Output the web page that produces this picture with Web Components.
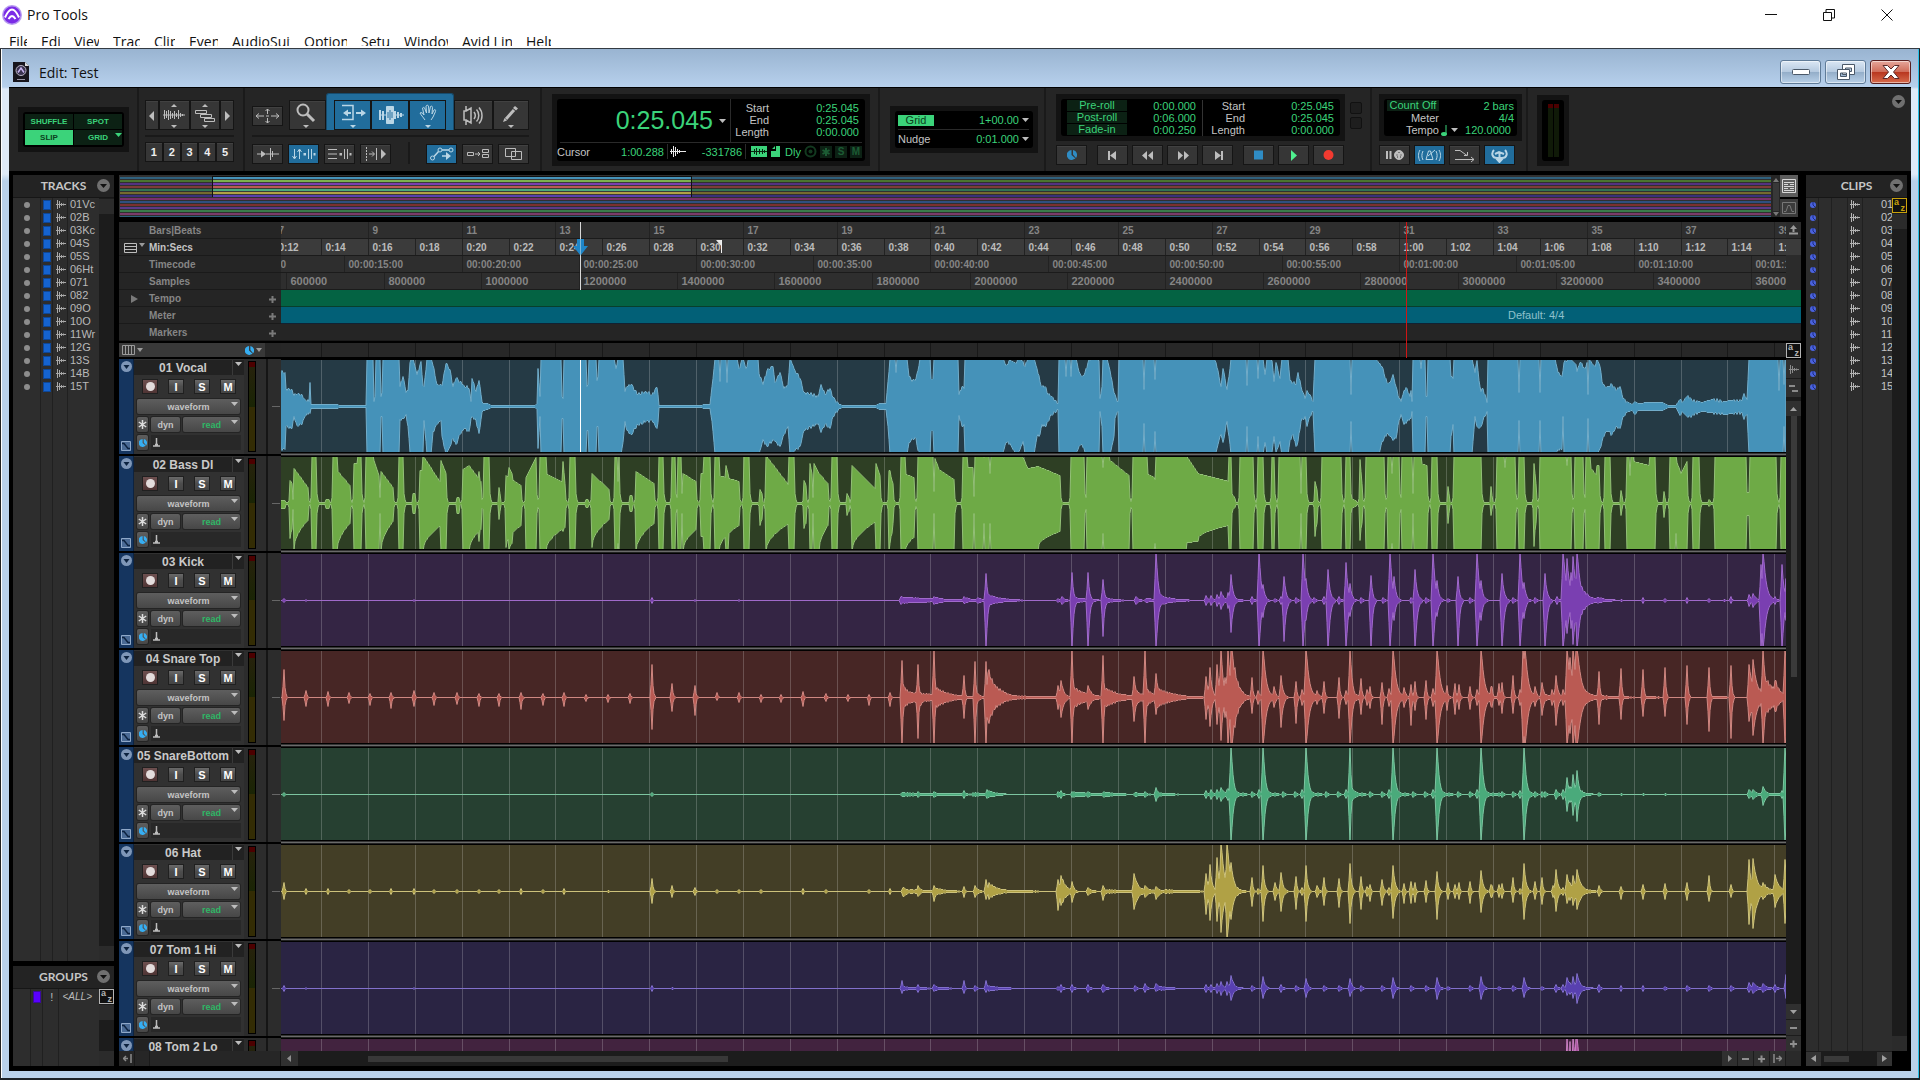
<!DOCTYPE html>
<html lang="en">
<head>
  <meta charset="UTF-8">
  <meta name="viewport" content="width=device-width, initial-scale=1.0">
  <title>Pro Tools</title>
  <style>
    html, body {
      margin: 0;
      height: 100%;
    }
    body {
      font-family: "Liberation Sans", Arial, sans-serif;
      font-size: 11px;
      background: #1d2227;
      overflow: hidden;
    }
  </style>
</head>
<body>

<daw-app></daw-app>

<script>
  const BASE = `
    *, *::before { box-sizing: border-box; }
    button, select {
      font: inherit; color: inherit; border: 0; padding: 0; margin: 0;
      background: none; appearance: none; display: block; border-radius: 0;
    }
    svg { display: block; flex: none; }
  `;

  function render(el, css, html) {
    const root = el.shadowRoot || el.attachShadow({ mode: 'open' });
    root.innerHTML = `<style>${BASE}${css}</style>${html}`;
    return root;
  }

  const icon = (w, h, body, color = '#bdbdbd') =>
    `<svg width="${w}" height="${h}" viewBox="0 0 ${w} ${h}" fill="none" stroke="${color}" aria-hidden="true">${body}</svg>`;

  const down = (color = '#bdbdbd', w = 7) => icon(w, 4, `<path d="M0 0h${w}l-${w / 2} 4z" fill="${color}" stroke="none"/>`);
  const miniWave = (color = '#c8c8c8') => icon(10, 9, '<path d="M1.500 0v9M3.500 1v7M5.500 3v3M7.500 3.500v2M0 4.500h10"/>', color);
  const timebase = (size = 10, color = '#36aef2') => icon(size, size,
    '<path d="M4.500 0A5 5 0 0 0 5 10L8.500 8.500 4.500 5zM6 0v4.500L9 8A5 5 0 0 0 6 0z" stroke="none" fill="' + color + '"/>').replace(/viewBox="[^"]*"/, 'viewBox="0 0 10 10"');
  const roundMenu = '<svg width="13" height="13" viewBox="0 0 13 13"><circle cx="6.500" cy="6.500" r="6.500" fill="#707070"/><path d="M3 5h7L6.500 9z" fill="#111"/></svg>';
  const bigWave = '<path d="M1.500 9v9M3.500 10v7M5.500 9v10M7.500 10v8M9.500 12v5M11.500 10v8M13.500 12v4M15.500 9v9M17.500 12v4M19.500 13v2M0 14h22"/>';

  // ---------- window frame ----------

  class MenuBar extends HTMLElement {
    connectedCallback() {
      const items = [['File', 18], ['Edit', 19], ['View', 25], ['Track', 27], ['Clip', 21], ['Event', 29],
        ['AudioSuite', 58], ['Options', 43], ['Setup', 29], ['Window', 44], ['Avid Link', 50], ['Help', 25]];
      render(this, `
        :host { display: block; background: #fff; color: #111; height: 49px; font: 14px "Open Sans", "Noto Sans", sans-serif; border-bottom: 1px solid #333a42; }
        .title { display: flex; align-items: center; height: 29px; padding: 0 4px 0 2px; gap: 5px; }
        .ctl { margin-left: auto; display: flex; }
        .ctl button { width: 58px; height: 29px; display: grid; place-items: center; }
        nav { display: flex; gap: 14px; padding-left: 9px; margin-top: 4px; }
        nav button { height: 13px; line-height: 17px; overflow: hidden; white-space: nowrap; text-align: left; display: flex; align-items: flex-start; }
      `, `
        <div class="title">
          <svg width="20" height="20" viewBox="0 0 20 20"><circle cx="10" cy="10" r="10" fill="#b79af0"/><circle cx="10" cy="10" r="8.500" fill="#7a2be6"/>
            <path d="M3 12.500C5 8 7.500 4.500 10 4.500s5 3.500 7 8M6.500 14c1.200-1.800 2.200-3 3.500-3s2.300 1.200 3.500 3" fill="none" stroke="#fff" stroke-width="2"/></svg>
          <span>Pro Tools</span>
          <span class="ctl">
            <button aria-label="Minimize">${icon(12, 12, '<path d="M0 5.500h12"/>', '#111')}</button>
            <button aria-label="Restore">${icon(12, 12, '<path d="M.5 3.500h8v8h-8zM3 3V.500h8.500V9H9"/>', '#111')}</button>
            <button aria-label="Close">${icon(12, 12, '<path d="M.5.500l11 11M11.500.500l-11 11"/>', '#111')}</button>
          </span>
        </div>
        <nav>${items.map(([t, w]) => `<button style="width:${w}px">${t}</button>`).join('')}</nav>
      `);
    }
  }
  customElements.define('menu-bar', MenuBar);

  class ChildWindow extends HTMLElement {
    connectedCallback() {
      render(this, `
        :host {
          display: flex; flex-direction: column; min-height: 0; padding: 0 8px 7px;
          border: solid #222; border-width: 0 1px 0 1px; box-shadow: inset 1px 0 #fff, inset -1px 0 #28c0e8;
          background: linear-gradient(#99b4d1, #b7d0ec 38px, #dfeaf7 40px, #dfeaf7 125px, #b9d1ea 132px);
        }
        header { display: flex; align-items: center; height: 38px; padding: 8px 0 0 4px; font: 14px "Open Sans", "Noto Sans", sans-serif; color: #111; gap: 10px; flex: none; }
        .ctl { margin-left: auto; display: flex; gap: 4px; }
        .ctl button { width: 41px; height: 24px; border: 1px solid #5f7b98; border-radius: 3px; display: grid; place-items: center;
          background: linear-gradient(#dbe7f4, #b4c9df 50%, #93adc8 50%, #b8d0e8); box-shadow: inset 0 0 0 1px #ffffff80; }
        .ctl .close { border-color: #581e1e; background: linear-gradient(#e6a79b, #cf6b58 50%, #b8351e 50%, #d66b4c); }
        .body { flex: 1; min-height: 0; background: #000; display: flex; flex-direction: column; padding-top: 1px; }
      `, `
        <header>
          <svg width="16" height="20" viewBox="0 0 16 20"><path d="M0 0h12l4 4v16H0z" fill="#17151c"/><circle cx="8" cy="8.500" r="5" fill="#3b3350" stroke="#b9b4c4"/>
            <path d="M5 10.500L8 6l3 4.500" fill="none" stroke="#c9b6f0" stroke-width="1.500"/><path d="M4 17.500h8" stroke="#9a96a5"/><path d="M12 0v4h4z" fill="#ddd"/></svg>
          <span>Edit: Test</span>
          <span class="ctl">
            <button aria-label="Minimize">${icon(20, 8, '<rect x="1.500" y="1.500" width="17" height="5" rx="1" fill="#fff"/>', '#4a5868')}</button>
            <button aria-label="Restore">${icon(20, 18, '<path d="M6.500 1.500h12v10h-12zM9.500 5h6v3.500h-6z" fill="#fff" fill-rule="evenodd"/><path d="M1.500 6.500h12v10h-12zM4.500 10h6v3.500h-6z" fill="#fff" fill-rule="evenodd"/>', '#4a5868')}</button>
            <button class="close" aria-label="Close">${icon(20, 16, '<path d="M2 1.500h4.500L10 5l3.500-3.500H18L12.500 8l5.500 6.500h-4.500L10 11l-3.500 3.500H2L7.500 8z" fill="#fff"/>', '#5a2a2a')}</button>
          </span>
        </header>
        <div class="body"><slot></slot></div>
      `);
    }
  }
  customElements.define('child-window', ChildWindow);

  // ---------- toolbar ----------

  class ToolButton extends HTMLElement {
    connectedCallback() {
      render(this, `
        :host { display: block; width: var(--w, 31px); height: var(--h, 20px); }
        button { width: 100%; height: 100%; display: grid; place-items: center; background: #363636; border: 1px solid #151515;
          box-shadow: inset 0 1px #414141; color: #eee; font-weight: bold; line-height: 1; }
        :host([on]) button { background: #216d9c; box-shadow: none; }
      `, `<button aria-label="${this.getAttribute('label') || ''}"><slot></slot></button>`);
    }
  }
  customElements.define('tool-button', ToolButton);

  class LcdPanel extends HTMLElement {
    connectedCallback() {
      render(this, `
        :host { display: block; background: #131313; padding: 5px; }
        div { height: 100%; background: #000; border-radius: 3px; color: #3bd37a; }
      `, '<div><slot></slot></div>');
    }
  }
  customElements.define('lcd-panel', LcdPanel);

  class EditToolbar extends HTMLElement {
    connectedCallback() {
      const btn = (label, body, { w = 31, h = 20, on = false, iw = w - 6, ih = h - 4, cls = '', color } = {}) =>
        `<tool-button class="${cls}" label="${label}" ${on ? 'on' : ''} style="--w:${w}px;--h:${h}px">${icon(iw, ih, body, color || (on ? '#b9d6e6' : '#bdbdbd'))}</tool-button>`;
      const solid = d => `<path d="${d}" fill="#bdbdbd" stroke="none"/>`;
      const caret = (x, y, c = '#bdbdbd') => `<path d="M${x - 3} ${y}h6l-3 3z" fill="${c}" stroke="none"/>`;
      const caretUp = (x, y) => `<path d="M${x - 3} ${y + 3}h6l-3-3z" fill="#bdbdbd" stroke="none"/>`;

      render(this, `
        :host { display: flex; height: 83px; background: #252525; color: #c4c4c4; flex: none; }
        section { border-right: 2px solid #1a1a1a; display: flex; flex: none; }
        .row { display: flex; }
        hr { width: 100%; border: 0; height: 2px; background: #191919; margin: 5px 0; }
        .modes { width: 130px; padding: 19px 8px 0 9px; }
        .modes lcd-panel { width: 111px; height: 45px; }
        .grid4 { display: grid; grid-template-columns: 1fr 1fr; grid-template-rows: 15px 15px; gap: 1px; padding: 2px; font-size: 8px; font-weight: bold; }
        .grid4 button { background: #0c2114; position: relative; }
        .grid4 .sel { background: #3bd37a; color: #0c4020; }
        .grid4 svg { position: absolute; right: 0; top: 3px; }
        .zooms { width: 106px; padding: 12px 9px 0 6px; flex-direction: column; }
        .tools { width: 297px; padding: 5px 11px 0 7px; flex-direction: column; }
        .tools .row { align-items: flex-end; }
        .smart { display: flex; background: #216d9c; height: 37px; padding: 0 7px; border-radius: 3px 3px 0 0; align-items: flex-end; border: 1px solid #174b6c; border-bottom: 0; }
        .counter { width: 338px; padding: 6px 8px 0 10px; }
        .counter lcd-panel { width: 318px; height: 72px; }
        .main { display: flex; height: 44px; border-bottom: 1px solid #2a2a2a; margin: 0 3px; }
        .big { width: 171px; display: flex; align-items: center; justify-content: flex-end; gap: 6px; padding-right: 4px; font-size: 25px; border-right: 1px solid #2a2a2a; }
        .sel3 { flex: 1; display: grid; grid-template-columns: 38px 1fr; grid-auto-rows: 12px; line-height: 12px; text-align: right; padding: 3px 3px 0 0; }
        .lbl { color: #c4c4c4; font-weight: normal; }
        .foot { display: flex; height: 17px; align-items: center; }
        .foot > span { display: flex; align-items: center; justify-content: space-between; height: 15px; padding: 0 3px 0 2px; border-right: 1px solid #2a2a2a; }
        .foot .cursor { width: 112px; padding-left: 0; }
        .foot .flags { border: 0; gap: 3px; padding-left: 5px; }
        .flag { width: 12px; height: 12px; line-height: 12px; text-align: center; background: #0c2114; color: #1c5c34; font-size: 10px; }
        .gn { width: 166px; padding: 18px 6px 0 10px; }
        .gn lcd-panel { width: 148px; height: 47px; }
        .gn .row { height: 18px; align-items: center; justify-content: space-between; margin: 0 4px 0 3px; }
        .gn .row + .row { border-top: 1px solid #2a2a2a; height: 19px; }
        .gn .chip { background: #3bd37a; color: #0c4020; width: 36px; height: 11px; line-height: 11px; text-align: center; }
        .gn span.v { display: flex; align-items: center; gap: 3px; }
        select { text-align: right; }
        .transport { width: 326px; padding: 6px 0 0 10px; flex-wrap: wrap; align-content: flex-start; }
        .transport lcd-panel { width: 289px; height: 47px; }
        .roll { display: grid; grid-template-columns: 60px 69px 7px 42px 89px; grid-auto-rows: 12px; line-height: 12px; text-align: right; padding: 1px 0 0 6px; }
        .chip2 { background: #0c2114; text-align: center; height: 11px; line-height: 11px; }
        .sep { border-right: 1px solid #333; }
        .sq { display: grid; gap: 3px; margin: 8px 0 0 5px; align-content: start; }
        .sq i { width: 12px; height: 12px; border: 1px solid #111; border-radius: 2px; background: #1e1e1e; }
        .keys { display: flex; gap: 4px; margin-top: 4px; width: 100%; }
        .gap { margin-left: 6px; }
        .meter { width: 156px; padding: 6px 4px 0 7px; flex-direction: column; }
        .meter lcd-panel { width: 143px; height: 47px; }
        .meter .keys { width: auto; }
        .tempo { display: grid; grid-template-columns: 52px 1fr; grid-auto-rows: 12px; line-height: 12px; text-align: right; padding: 1px 3px 0; }
        .tempo span.v { display: flex; align-items: center; justify-content: flex-end; gap: 4px; }
        .out { flex: 1; border: 0; padding: 7px 6px 0 9px; justify-content: space-between; }
        .out lcd-panel { width: 32px; height: 71px; }
        .bars { display: flex; gap: 1px; justify-content: center; padding-top: 4px; }
        .bars i { width: 5px; height: 53px; background: linear-gradient(#4c0000 4px, #101a08 4px); }
      `, `
        <section class="modes"><lcd-panel><div class="grid4">
          <button>SHUFFLE</button><button>SPOT</button><button class="sel">SLIP</button><button>GRID${down('#3bd37a')}</button>
        </div></lcd-panel></section>

        <section class="zooms">
          <div class="row">
            ${btn('Zoom out', '<path d="M6 10v10l-5-5z" fill="#bdbdbd" stroke="none"/>', { w: 14, h: 30, iw: 8, ih: 28 })}
            ${btn('Audio zoom', bigWave + caretUp(11, 3) + caret(11, 24), { w: 31, h: 30, iw: 22, ih: 28 })}
            ${btn('MIDI zoom', '<path d="M1.500 9.500h11v3h-11zM6.500 13.500h11v3h-11zM10.500 17.500h10v3h-10z"/>' + caretUp(11, 3) + caret(11, 24), { w: 31, h: 30, iw: 22, ih: 28 })}
            ${btn('Zoom in', '<path d="M2 10v10l5-5z" fill="#bdbdbd" stroke="none"/>', { w: 14, h: 30, iw: 8, ih: 28 })}
          </div>
          <hr>
          <div class="row">${[1, 2, 3, 4, 5].map(n => `<tool-button style="--w:18px">${n}</tool-button>`).join('')}</div>
        </section>

        <section class="tools">
          <div class="row">
            <tool-button label="Zoomer" style="--w:31px;margin-bottom:4px">${icon(25, 16, '<path d="M1 8h8M16 8h8M4 5.500L1 8l3 2.500M21 5.500L24 8l-3 2.500M12.500 1v5M12.500 10v5M10.500 3l2-2 2 2M10.500 13l2 2 2-2M11 8h3"/>')}</tool-button>
            ${btn('Zoom', '<circle cx="12" cy="8" r="5.500" stroke-width="2"/><path d="M16 12l7 7" stroke-width="3"/>' + caret(15, 23), { w: 38, h: 30, iw: 32, ih: 27, cls: 'gap' })}
            <div class="smart">
              ${btn('Trim', '<path d="M5 3.500h11v14H5" stroke-width="1.500"/><path d="M10 11h4M19 11h6" stroke-width="2"/><path d="M11 7.500v7L6 11zM24 7.500v7l5-3.500z" fill="#b9d6e6" stroke="none"/>' + caret(16, 23, '#b9d6e6'), { w: 37, h: 30, on: true, iw: 32, ih: 27 })}
              ${btn('Selector', '<path d="M13.500 4.500h7v17h-7z" fill="#b9d6e6"/><path d="M7 8v10M10 9v9M22 9v8M25 10v6M28 11v4" stroke-width="2"/><path d="M6 13h25"/><path d="M17 8v10M15 10v6M19 10v6" stroke="#216d9c"/>', { w: 38, h: 30, on: true, iw: 34, ih: 27 })}
              ${btn('Grabber', '<path d="M11 18c-2-3-4-5-5-7 1-1 3 0 4 2L8.500 6c1-1 2-1 2.500 1l1.500 4-.5-7c1-1 2-1 2.500 0l.5 7 1.500-6.500c1-1 2 0 2 1l-.5 6.500 2-4c1-1 2 0 1.500 1.500L19 15l-2 3"/>' + caret(14, 23, '#b9d6e6'), { w: 37, h: 30, on: true, iw: 28, ih: 27 })}
            </div>
            ${btn('Scrubber', '<path d="M7 4v5H5v9h2v5M7 9l5-3v15l-5-3M15 10c1.500 2 1.500 5 0 7M17.500 7.500c3 3 3 9 0 12M20 5.500c4 4.500 4 12 0 16" stroke-width="1.500"/>', { w: 39, h: 30, iw: 28, ih: 27 })}
            ${btn('Pencil', '<path d="M10 17l8-9" stroke-width="3"/><path d="M7 20l1.500-4 2.500 2.500zM19 4l3 2.500-2 2-3-2.500z" fill="#bdbdbd" stroke="none"/>' + caret(15, 23), { w: 37, h: 30, iw: 30, ih: 27 })}
          </div>
          <hr>
          <div class="row" style="gap:5px">
            ${btn('Tab to transients', '<path d="M2 8h5M11 8h13M15.500 2v12M17.500 5v6" /><path d="M6 4.500v7l5-3.500z" fill="#bdbdbd" stroke="none"/>')}
            ${btn('Link timeline', '<path d="M3.500 3v9M1.500 10l2 3 2-3M8.500 13V4M6.500 6l2-3 2 3M17.500 3v10M20.500 3v10"/><path d="M12.500 7h2.500v2.500h-2.500zM22.500 7h2v2.500h-2z" fill="#b9d6e6" stroke="none"/>', { on: true })}
            ${btn('Link track', '<path d="M1 3.500h9M1 8h9M1 12.500h9M17.500 3v10M20.500 3v10"/><path d="M12.500 7h2.500v2.500h-2.500zM22.500 7h2v2.500h-2z" fill="#bdbdbd" stroke="none"/>')}
            ${btn('Insertion follows', '<path d="M3.500 1v14" stroke-dasharray="2 1"/><path d="M6 8h5M9 5.500L11.500 8 9 10.500M13.500 2v12"/><path d="M18 3v10l5-5z" fill="#bdbdbd" stroke="none"/>')}
            <i style="width:2px;height:22px;background:#191919;margin:0 11px 0 12px"></i>
            ${btn('Automation follows edit', '<circle cx="3.500" cy="12" r="2"/><circle cx="11" cy="4" r="2"/><circle cx="22" cy="4" r="2"/><path d="M5 10.500L9.500 5.500M13 4h7M13 10h5" stroke-width="1.500"/><path d="M17 6v8l5-4z" fill="#b9d6e6" stroke="none"/>', { on: true })}
            ${btn('Mirrored MIDI', '<path d="M2.500 6.500h6v3h-6zM10 8h5M13 6l2 2-2 2M17.500 3.500h6v3h-6zM17.500 8.500h6v3h-6z"/>')}
            ${btn('Layered editing', '<path d="M4.500 2.500h10v8h-10zM10.500 5.500h10v8h-10z"/>')}
          </div>
        </section>

        <section class="counter"><lcd-panel>
          <div class="main">
            <div class="big"><span>0:25.045</span>${down()}</div>
            <div class="sel3"><span class="lbl">Start</span><span>0:25.045</span><span class="lbl">End</span><span>0:25.045</span><span class="lbl">Length</span><span>0:00.000</span></div>
          </div>
          <div class="foot">
            <span class="cursor"><b class="lbl">Cursor</b>1:00.288</span>
            <span style="width:79px">${icon(16, 11, '<path d="M1.500 3v5M3.500 0v11M5.500 1v9M7.500 3v5M9.500 4v3M0 5.500h16"/>', '#e8e8e8')}-331786</span>
            <span class="flags">
              <svg width="16" height="11"><path d="M0 0h16v11H0z" fill="#3bd37a"/><path d="M0 5.500h16M3.500 3v5M5.500 2v7M8.500 3v5M11.500 3v5M13.500 4v3" stroke="#08250f"/></svg>
              <svg width="12" height="11"><path d="M6 0h4v11H1V5h5z M2 3l3-3v3z" fill="#3bd37a"/></svg>Dly
              <svg width="13" height="13"><circle cx="6.500" cy="6.500" r="5" fill="none" stroke="#12391f" stroke-width="2"/><circle cx="6.500" cy="6.500" r="2" fill="#12391f"/></svg>
              <svg width="12" height="12"><path d="M0 0h12v12H0z" fill="#0c2114"/><path d="M6 2v8M2.500 4l7 4M9.500 4l-7 4" stroke="#1c5c34" stroke-width="2"/></svg>
              <b class="flag">S</b><b class="flag">M</b>
            </span>
          </div>
        </lcd-panel></section>

        <section class="gn"><lcd-panel>
          <div class="row"><button class="chip">Grid</button><span class="v"><select aria-label="Grid value"><option>1+00.00</option></select>${down()}</span></div>
          <div class="row"><span class="lbl">Nudge</span><span class="v"><select aria-label="Nudge value"><option>0:01.000</option></select>${down()}</span></div>
        </lcd-panel></section>

        <section class="transport">
          <lcd-panel><div class="roll">
            <span class="chip2">Pre-roll</span><span>0:00.000</span><i class="sep"></i><span class="lbl">Start</span><span>0:25.045</span>
            <span class="chip2">Post-roll</span><span>0:06.000</span><i class="sep"></i><span class="lbl">End</span><span>0:25.045</span>
            <span class="chip2">Fade-in</span><span>0:00.250</span><i class="sep"></i><span class="lbl">Length</span><span>0:00.000</span>
          </div></lcd-panel>
          <div class="sq"><i></i><i></i></div>
          <div class="keys">
            <tool-button label="Online">${timebase(10, '#2f8cc4')}</tool-button>
            ${btn('Return to zero', solid('M8 4h2v9H8zM16 4v9l-6-4.500z'), { cls: 'gap' })}
            ${btn('Rewind', solid('M12 4v9L7 8.500zM18 4v9l-5-4.500z'))}
            ${btn('Fast forward', solid('M8 4v9l5-4.500zM14 4v9l5-4.500z'))}
            ${btn('Go to end', solid('M16 4h2v9h-2zM10 4v9l6-4.500z'))}
            ${btn('Stop', '<path d="M8 3.500h9v9H8z" fill="#2f8cc4" stroke="none"/>', { cls: 'gap' })}
            ${btn('Play', '<path d="M10 3v11l6-5.500z" fill="#4ff08f" stroke="none"/>')}
            ${btn('Record', '<circle cx="12.500" cy="8" r="5" fill="#f23a30" stroke="none"/>')}
          </div>
        </section>

        <section class="meter">
          <lcd-panel><div class="tempo">
            <span class="chip2">Count Off</span><span>2 bars</span><span class="lbl">Meter</span><span>4/4</span><span class="lbl">Tempo</span>
            <span class="v"><svg width="6" height="11"><path d="M5 0v9" stroke="#3bd37a"/><ellipse cx="3" cy="9" rx="3" ry="2" fill="#3bd37a"/></svg>${down()}<span style="margin:0 3px 0 3px">120.0000</span></span>
          </div></lcd-panel>
          <div class="keys">
            ${btn('Wait for note', '<path d="M5 4v8M8.500 4v8" stroke-width="2"/><circle cx="17" cy="8" r="4.500" fill="#bdbdbd"/><path d="M14.500 8h1M18.500 8h1M16.500 5.500h1M15 10h1M18 10h1" stroke="#333"/>')}
            ${btn('Metronome', '<path d="M9 12.500L11.500 4h2L16 12.500zM11 9l7-6M6 4c-1.500 3-1.500 6 0 9M3 3c-2 3.500-2 7.500 0 11M19 4c1.500 3 1.500 6 0 9M22 3c2 3.500 2 7.500 0 11"/>', { on: true })}
            ${btn('Count off', '<path d="M3 3.500h5l7 5M12 8.500h3.500V5M3 12.500h19M19 10l3 2.500-3 2.500"/>')}
            ${btn('Conductor', '<path d="M7 3c-3 3-2 8 3 8h5c5 0 6-5 3-8M12.500 15V6M9 11l3.500 4 3.500-4M8 7l4-2 5 2" stroke-width="2"/>', { on: true })}
          </div>
        </section>

        <section class="out"><lcd-panel><div class="bars"><i></i><i></i></div></lcd-panel>${roundMenu}</section>
      `);
    }
  }
  customElements.define('edit-toolbar', EditToolbar);

  // ---------- side lists ----------

  class ListPanel extends HTMLElement {
    connectedCallback() {
      const cols = this.getAttribute('cols').split(' ');
      const az = this.getAttribute('az');
      render(this, `
        :host { display: flex; flex-direction: column; width: 101px; background: #2d2d2d; min-height: 0; color: #b9b9b9; }
        header { height: 23px; display: flex; align-items: center; background: #232323; border-bottom: 1px solid #161616; padding: 0 4px 1px 0;
          font: bold 12px Lato, "Liberation Sans", sans-serif; color: #c6c6c6; flex: none; }
        h2 { font: inherit; margin: 0 0 0 17px; flex: 1; text-align: center; }
        .body { flex: 1; display: flex; min-height: 0; }
        .rows { flex: 1; min-width: 0; overflow: hidden; background-color: #2d2d2d; background-repeat: no-repeat;
          background-image: ${cols.map(() => 'linear-gradient(#202020, #202020)').join()};
          background-position: ${cols.map(c => c + 'px 0').join()}; background-size: 1px 100%; }
        .bar { width: 15px; background: #1c1c1c; display: flex; flex-direction: column; justify-content: space-between; }
        .bar i { height: 15px; background: #2b2b2b; }
      `, `
        <header><h2>${this.getAttribute('heading')}</h2>${roundMenu}</header>
        <div class="body"><div class="rows"><slot></slot></div>
          <div class="bar"><div>${az ? `<az-button style="color:${az}"></az-button>` : ''}<i style="display:block;margin-top:1px"></i></div><i></i></div>
        </div>
        <slot name="foot"></slot>
      `);
    }
  }
  customElements.define('list-panel', ListPanel);

  class AzButton extends HTMLElement {
    connectedCallback() {
      render(this, `
        :host { display: block; width: 15px; height: 15px; }
        button { width: 15px; height: 15px; border: 1px solid; background: #111; display: flex; justify-content: space-between; font: bold 9px/7px "Liberation Sans", sans-serif; padding: 0 1px; }
        span + span { align-self: flex-end; }
      `, '<button aria-label="Sort"><span>a</span><span>z</span></button>');
    }
  }
  customElements.define('az-button', AzButton);

  class TrackRow extends HTMLElement {
    connectedCallback() {
      render(this, `
        :host { display: grid; grid-template-columns: 28px 12px 15px 1fr; height: 13px; align-items: center; justify-items: center; line-height: 13px; }
        .dot { width: 6px; height: 6px; border-radius: 50%; background: #8d8d8d; }
        .tag { width: 8px; height: 10px; background: #1563cf; border: 1px solid #0f4796; }
        span { justify-self: start; padding-left: 2px; }
      `, `<i class="dot"></i><i class="tag"></i>${miniWave('#a9a9a9')}<span><slot></slot></span>`);
    }
  }
  customElements.define('track-row', TrackRow);

  class ClipRow extends HTMLElement {
    connectedCallback() {
      render(this, `
        :host { display: grid; grid-template-columns: 13px 28px 15px 1fr; height: 13px; align-items: center; justify-items: center; line-height: 13px; color: #c4c4c4; }
        span { justify-self: start; padding-left: 19px; width: 100%; overflow: hidden; }
      `, `<svg width="6" height="6"><circle cx="3" cy="3" r="3" fill="#4a62dd"/><path d="M3 0v3l2 2" stroke="#1b2a80" fill="none"/></svg><i></i>${miniWave('#b4b4b4')}<span><slot></slot></span>`);
    }
  }
  customElements.define('clip-row', ClipRow);

  // ---------- timeline ----------

  // Horizontal scale of the edit area, in px per second.
  const PPS = 23.44;
  const timeToX = t => Math.round(40 + (t - 14) * PPS) + 0.5;
  const VIEW_W = 4000;

  const two = n => String(n).padStart(2, '0');

  class UniverseView extends HTMLElement {
    connectedCallback() {
      const dim = ['#2f607d', '#4a7530', '#533282', '#7d3c38', '#2f7353', '#746a2e', '#38307a', '#7a3068', '#2f5080', '#7b3030', '#5a3a8a', '#3a7a4a', '#7a3a6a', '#2f607d'];
      const lit = ['#4592b9', '#7db14f', '#7a3fb1', '#ba5a53', '#4aaa7b', '#b0a145', '#5840b0'];
      const stripes = (list, x, w) => list.map((c, i) => `<rect x="${x}" y="${2 + i * 3}" width="${w}" height="2" fill="${c}"/>`).join('');
      render(this, `
        :host { display: flex; height: 42px; background: #303030; flex: none; }
        .map { flex: 1; min-width: 0; }
        .sb { width: 9px; background: #262626; display: flex; flex-direction: column; align-items: center; justify-content: space-between; padding: 3px 0 1px; }
        .sb i { width: 6px; flex: 1; margin: 1px 0; background: #383838; }
        .btns { display: grid; grid-template-rows: 22px 18px; gap: 2px; width: 21px; background: #000; padding: 0 3px 0 0; }
        button { background: #5d5d5d; display: grid; place-items: center; }
        button + button { background: #3b3b3b; }
      `, `
        <svg class="map" width="100%" height="42">${stripes(dim, 1, '100%')}
          <rect x="93.500" y="1.500" width="479" height="20" fill="#3a3a3a" stroke="#111"/>${stripes(lit, 94, 478)}</svg>
        <div class="sb">${icon(6, 4, '<path d="M0 4h6L3 0z" fill="#777" stroke="none"/>')}<i></i>${down('#777', 6)}</div>
        <div class="btns">
          <button aria-label="Show universe">${icon(14, 14, '<path d="M.500.500h13v13H.500zM2 3.500h10M2 5.500h4M8 5.500h4M2 7.500h10M2 9.500h4M8 9.500h4M2 11.500h10"/>', '#d8d8d8')}</button>
          <button aria-label="Show curve">${icon(14, 12, '<path d="M.500.500h13v11H.500zM2 9.500h2l2-6h2l2 6h2"/>', '#777')}</button>
        </div>
      `);
    }
  }
  customElements.define('universe-view', UniverseView);

  class TimeRulers extends HTMLElement {
    connectedCallback() {
      const plus = icon(7, 7, '<path d="M3.500 0v7M0 3.500h7" stroke-width="2"/>', '#7a7a7a');
      const names = ['Bars|Beats', 'Min:Secs', 'Timecode', 'Samples', 'Tempo', 'Meter', 'Markers'];
      let marks = '';
      const mark = (t, row, text, size = 10, fill = '#858585') => {
        const x = timeToX(t);
        marks += `<path d="M${x} ${row * 17}v16" stroke="#222"/><text x="${x + 4}" y="${row * 17 + 12}" font-size="${size}" fill="${fill}">${text}</text>`;
      };
      for (let bar = 7; bar <= 39; bar += 2) mark(12 + (bar - 7) * 2, 0, bar);
      for (let s = 12; s <= 76; s += 2) mark(s, 1, `${Math.floor(s / 60)}:${two(s % 60)}`, 10, '#bcbcbc');
      for (let s = 10; s <= 75; s += 5) mark(s, 2, `00:${two(Math.floor(s / 60))}:${two(s % 60)}:00`);
      for (let n = 600000; n <= 3600000; n += 200000) mark(n / 48000, 3, n, 11);
      let ticks = '';
      for (let s = 14; s <= 76; s += 2) ticks += `<path d="M${timeToX(s)} 0v14" stroke="#181818"/>`;

      render(this, `
        :host { display: grid; grid-template-columns: 162px minmax(0, 1fr) 15px; grid-template-rows: 119px 14px; row-gap: 2px; position: relative; flex: none; margin-bottom: 2px; }
        .names { background: #252525; color: #858585; font-size: 10px; font-weight: bold; }
        .names div { height: 17px; border-bottom: 1px solid #1a1a1a; display: grid; grid-template-columns: 30px 1fr 12px; align-items: center; line-height: 16px; padding-top: 1px; }
        .names .cur { color: #c4c4c4; }
        .names div > :first-child { justify-self: center; display: flex; gap: 2px; }
        .canvas { background: linear-gradient(#2e2e2e 17px, #3b3b3b 17px 34px, #2e2e2e 34px 68px, #046343 68px 84px, #083f2c 84px 85px, #026077 85px 101px, #123 101px 102px, #252525 102px);
          grid-column: 2 / 4; }
        .canvas text { font-weight: bold; }
        .side { position: absolute; right: 0; top: 0; width: 15px; height: 68px; background: linear-gradient(#2b2b2b 16px, #1c1c1c 16px 17px, #3b3b3b 17px 33px, #2b2b2b 33px); display: flex; justify-content: center; padding-top: 3px; }
        .strip { background: #262626; }
        .cols { background: #383838; width: 146px; height: 14px; display: flex; align-items: center; gap: 2px; padding: 0 3px; }
        .over { position: absolute; left: 162px; top: 0; pointer-events: none; }
      `, `
        <div class="names">${names.map((n, i) => `<div class="${i === 1 ? 'cur' : ''}">
          <span>${i === 1 ? icon(13, 10, '<path d="M.500.500h12v9H.500zM0 3.500h13M0 6.500h13"/>') + down('#9a9a9a', 6) : i === 4 ? icon(7, 8, '<path d="M0 0v8l7-4z" fill="#7a7a7a" stroke="none"/>') : ''}</span>
          <span>${n}</span>${i > 3 ? plus : ''}</div>`).join('')}</div>
        <svg class="canvas" width="100%" height="119">
          <svg width="100%" height="68" x="0">${marks}</svg>
          <path d="M0 16.500h${VIEW_W}M0 33.500h${VIEW_W}M0 50.500h${VIEW_W}M0 67.500h${VIEW_W}M0 118.500h${VIEW_W}" stroke="#1b1b1b"/>
          <text x="1227" y="97" fill="#8fc0cc" style="font-weight:400">Default: 4/4</text>
        </svg>
        <div class="side">${icon(9, 10, '<path d="M0 8.500h9" stroke-width="2"/><path d="M4.500 0L8 4H5.500v3h-2V4H1z" fill="#9a9a9a" stroke="none"/>', '#9a9a9a')}</div>
        <div class="strip"><div class="cols">${icon(13, 10, '<path d="M.500.500h12v9H.500zM3.500 0v10M6.500 0v10M9.500 0v10"/>', '#9a9a9a')}${down('#9a9a9a', 6)}
          <span style="margin-left:auto">${timebase(9)}</span>${down('#9a9a9a', 6)}</div></div>
        <svg width="100%" height="14" style="background:#272727">${ticks}</svg>
        <az-button style="color:#b4b4b4"></az-button>
        <svg class="over" width="1505" height="137">
          <path d="M299.500 0v68" stroke="#d8d8d8"/>
          <path d="M296 17h7v7h4l-7.500 9.500L292 24h4z" fill="#1f86c8"/>
          <path d="M299.500 17v16" stroke="#7ab8dc"/>
          <path d="M435 18h6v7z" fill="#e8e8e8"/><path d="M440.500 18v13" stroke="#f0f0f0"/>
          <path d="M1125.500 0v136" stroke="#d01515"/>
        </svg>
      `);
    }
  }
  customElements.define('time-rulers', TimeRulers);

  // ---------- waveforms ----------

  // An envelope holds the height above and below the centre line for each px column.
  const COLS = 1506;
  const FULL = 48;

  class Envelope {
    constructor(base) {
      this.up = new Float32Array(COLS).fill(base);
      this.dn = new Float32Array(COLS).fill(base);
    }
    peak(i, up, dn) {
      if (i < 0 || i >= COLS) return;
      this.up[i] = Math.max(this.up[i], up);
      this.dn[i] = Math.max(this.dn[i], dn);
    }
    // "x up down tail": a sharp attack with a decaying tail
    hits(start, scale, list) {
      list.trim().split(/\s*,\s*/).forEach(item => {
        const [x, up, dn = up, tail = 2] = item.split(' ').map(Number);
        const c = Math.round(start + x / scale);
        const u = up > 44 ? 54 : up;
        const d = dn > 44 ? 54 : dn;
        this.peak(c - 1, u * 0.4, d * 0.4);
        for (let k = 0; k < tail * 4; k++) {
          const f = Math.exp(-k / tail) * (tail > 4 ? 0.88 + 0.12 * Math.sin((c + k) * 2.3) : 1);
          this.peak(c + k, u * f, d * f);
        }
      });
      return this;
    }
    // "x0 x1 up0 up1 dn0 dn1": a held note; omitted heights mean full scale
    notes(start, scale, list) {
      list.trim().split(/\s*,\s*/).forEach(item => {
        const [x0, x1, u0 = FULL, u1 = u0, d0 = FULL, d1 = d0] = item.split(' ').map(Number);
        const a = Math.round(start + x0 / scale);
        const b = Math.max(a + 1, Math.round(start + x1 / scale));
        for (let i = a; i <= b; i++) {
          const f = (i - a) / (b - a);
          this.peak(i, u0 + (u1 - u0) * f, d0 + (d1 - d0) * Math.sqrt(f));
        }
        this.peak(a - 1, u0 * 0.12, d0 * 0.12);
        this.peak(b + 1, u1 * 0.2, d1 * 0.2);
        this.peak(b + 2, u1 * 0.08, d1 * 0.08);
      });
      return this;
    }
    // "x up down": straight lines between points
    line(start, list) {
      const pts = list.trim().split(/\s*,\s*/).map(p => p.split(' ').map(Number));
      for (let n = 0; n < pts.length - 1; n++) {
        const [x0, u0, d0 = u0] = pts[n];
        const [x1, u1, d1 = u1] = pts[n + 1];
        for (let x = x0; x <= x1; x++) {
          const i = x + start;
          if (i < 0 || i >= COLS) continue;
          const f = x1 > x0 ? (x - x0) / (x1 - x0) : 0;
          const rough = u0 > 5 && u0 < 46 && x > x0 ? Math.sin(x * 1.9) * 1.5 : 0;
          this.up[i] = u0 + (u1 - u0) * f + rough;
          this.dn[i] = d0 + (d1 - d0) * f + (d0 < 46 ? rough : 0);
        }
      }
      return this;
    }
    // "x up down": single columns set as they are
    cuts(start, list) {
      list.trim().split(/\s*,\s*/).forEach(p => {
        const [x, up, dn = up] = p.split(' ').map(Number);
        this.up[x + start] = up;
        this.dn[x + start] = dn;
      });
      return this;
    }
    path(mid) {
      let top = '';
      let bottom = '';
      for (let i = 0; i < COLS; i++) {
        top += `L${i} ${(mid - Math.min(FULL, Math.round(this.up[i])))}`;
        bottom = `L${i} ${(mid + Math.min(FULL, Math.round(this.dn[i])))}` + bottom;
      }
      return `M-2 ${mid}${top}${bottom}z`;
    }
  }

  // Start column of each third of the session.
  const A = -11;
  const B = 599;
  const C = 1199;

  const vocal = () => new Envelope(1).line(-281, `
    281 35 43,285 34 43,286 18 20,292 17 22,294 11 10,297 12 19,302 12 18,305 7 10,309 5 6,310 24 7,311 2 2,366 1 1,367 48 48,
    399 48 48,400 20 13,403 30 12,406 14 8,408 16 20,410 44 46,413 48 48,417 32 48,421 45 48,423 21 46,424 20 14,427 48 48,431 48 48,433 41 25,
    437 22 18,441 22 14,442 21 30,446 43 48,450 37 40,453 20 32,456 28 38,460 25 28,464 21 22,469 18 25,471 5 12,472 28 10,476 15 14,
    479 26 27,482 5 6,483 3 4,487 3 3,491 1 1,535 1 1,537 3 3,538 38 42,540 10 10,541 48 48,614 48 48,616 38 48,618 48 48,621 48 48,623 48 36,625 15 15,627 20 24,631 22 28,
    638 12 18,646 15 15,652 12 14,657 19 22,658 12 16,659 1 1,702 1 1,703 2 2,710 2 2,712 20 15,715 48 48,737 48 48,739 38 48,743 48 48,746 38 48,
    749 48 48,758 48 48,759 33 48,763 22 33,767 36 40,773 40 33,775 24 35,780 34 40,784 18 28,788 22 20,790 48 48,795 36 44,800 28 40,804 14 24,
    812 12 20,818 10 17,821 22 26,825 12 18,830 18 22,833 9 10,839 2 2,844 1 1,876 1 1,879 3 3,885 3 3,886 3 3,888 25 20,890 48 48,907 48 48,
    909 30 36,912 25 32,916 28 32,918 36 44,920 48 48,930 48 48,931 28 25,933 28 25,934 48 48,958 48 48,959 12 9,962 20 20,964 18 18,965 48 48,
    1000 48 48,1003 48 46,1006 41 36,1010 46 37,1016 43 48,1018 48 48,1023 45 35,1025 40 48,1028 48 48,1034 48 48,1037 38 30,1040 25 28,1042 20 18,1045 20 20,
    1048 12 15,1051 10 8,1055 6 6,1058 3 3,1059 48 48,1076 48 48,1079 35 40,1082 30 38,1085 34 46,1088 44 48,1091 48 48,1099 46 48,1100 8 5,
    1102 20 20,1103 48 48,1107 48 48,1110 36 48,1114 14 30,1115 12 12,1117 5 6,1118 5 5,1119 48 48,1214 48 48,1216 44 46,1219 30 34,1221 20 28,
    1223 38 36,1227 17 15,1229 30 30,1231 48 48,1263 48 48,1265 32 36,1267 48 48,1272 46 46,1274 25 30,1276 44 46,1280 28 35,1282 48 48,1288 48 48,
    1290 26 34,1293 24 28,1296 22 40,1298 34 35,1301 20 15,1305 8 10,1307 16 20,1310 12 10,1313 5 5,1315 48 48,1376 48 48,1379 43 48,1382 40 35,
    1387 24 27,1390 24 30,1393 32 34,1396 20 32,1399 8 14,1401 5 8,1404 16 18,1407 18 15,1410 10 12,1411 16 12,1412 5 5,1413 48 48,1450 48 48,
    1451 30 30,1453 28 18,1454 48 48,1472 48 48,1475 34 10,1477 46 20,1479 26 22,1481 15 20,1483 18 14,1487 4 5,1488 48 48,1555 48 48,1558 34 43,
    1562 30 43,1564 44 48,1570 48 48,1576 42 48,1577 35 48,1580 44 48,1585 38 48,1588 48 48,1595 40 48,1597 48 48,1600 40 42,1602 25 35,1605 20 27,
    1608 20 25,1612 22 28,1616 16 20,1620 20 22,1623 8 10,1628 4 5,1632 2 4,1635 5 8,1638 3 4,1650 4 4,1663 4 4,1668 1 1,1676 1 1,1680 7 9,1682 4 5,
    1688 11 11,1692 6 9,1698 5 6,1702 4 5,1712 7 6,1723 5 8,1733 6 7,1742 6 6,1744 13 13,1747 7 8,1749 48 48,1786 48 48`)
    .cuts(-281, `374 5 46,375 10 46,381 10 10,382 14 10,562 10 12,563 8 12,587 20 24,588 22 24,597 26 20,598 30 20,720 25 48,727 24 48,896 34 48,
      1066 30 48,1071 30 46,1144 17 17,1155 27 25,1247 21 20,1258 28 30,1351 12 15,1421 38 48,1426 10 10,1427 10 10,1519 14 14,1540 14 14,1563 36 10,
      1588 12 12,1779 16 46,1784 22 20`);

  const bass = () => new Envelope(1).notes(A, 2.45, `
    27 37 3 3 5 5,48 55 23 20 35 26,58 92 35 16 46 17,102 112,137 145 4 4 5 5,154 164,165 196 33 18 48 20,207 213 40 40,216 222,234 252,
    252 268 46 28,272 302 32 16 48 18,315 325,350 355 10 10 10 10,367 374 33 33,376 418 48 20 48 22,419 430 43 30,457 462 6 6 10 10,
    472 488 34 38,488 516 38 22 48 26,511 515 32 22 38 20,525 536,560 564 16 10 16 8,577 616 28 18 44 22,586 592 36 30 46 40,628 652 26 46,662 676,676 722 30 20 48 24,
    718 722 42 20 28 20,735 748,775 778 4 4 4 4,790 830 30 14 44 16,845 856,882 886 8 8 8 8,897 940 32 20 48 20,952 962,985 992,1000 1008,
    1012 1043 30 22 48 26,1055 1060 30 30 33 33,1064 1078,1090 1100,1100 1150 28 22 48 22,1118 1122 38 30,1162 1174,1200 1206 14 10 22 16,
    1216 1272 48 18 48 20,1272 1283,1308 1313 23 18 25 20,1322 1328 40 30,1334 1344 40 30,1345 1366 30 20 48 22,1378 1389,1413 1418 10 6 12 8,
    1427 1485 38 14 48 18,1485 1495 40 28,1520 1525 33 20 40 30,1547 1555,1555 1568 28 28 48 38`)
    .notes(B, 2.529, `
    24 32 33 20 48 20,54 60,60 86 30 26 48 34,95 133,136 150 48 34,150 186 34 24,211 219,220 235 36 36,239 262,266 358,358 375 48 35,375 400 35 37,
    400 455 37 28 44 28,484 516,524 580,580 630 44 28,640 676,676 692 30 26,696 775,775 805 48 30 40 38,805 883 30 22 36 22,883 888,894 898 8 5 6 4,
    911 944,957 969,992 997,1009 1061,1066 1078,1101 1106 22 14 33 20,1118 1165,1178 1189,1190 1205 5 3 6 3,1214 1218 44 20 37 20,1230 1275,
    1284 1313,1321 1345,1351 1368,1368 1383 40 38,1397 1409,1436 1440 17 10 20 10,1452 1520,1546 1549 16 8 12 6,1560 1568`)
    .notes(C, 3, `
    33 36 17 8 12 6,52 105,118 132,162 167 40 20 43 20,181 274,286 308,319 330,330 350 36 28,350 358 38 38,376 391,423 427 13 8 12 6,442 458,
    458 510 42 38,510 525,552 556 12 6 14 6,571 588,588 602 44 30,602 622 30 42,640 657,687 690 4 3 3 2,705 798,798 810 11 11 12 12,811 888,902 918`)
    .cuts(0, `337 22 40,653 12 10,703 46 20,709 30 20,822 36 30,874 24 40,1111 30 40,1224 36 48,1286 38 48,1349 28 48,1395 48 30`);

  const kick = () => new Envelope(0).hits(A, 2.45, '35 2 2 1,88 1 1 1,352 1 1 1,935 3 3 1,1042 1 1 1,1148 1 1 1,1547 4')
    .hits(B, 2.529, `
    55 4 3 40,105 3 3 12,136 4 4 12,213 4 3 8,245 3 3 8,268 27 46 1.5,270 7 6 14,290 2 2 20,460 4 4 3,450 2,485 28 46 1.5,525 28 46 1.5,563 21 36 1.5,
    487 4 3 14,565 4 4 10,648 4 4 3,672 3 2 9,698 46 46 2,700 8 7 12,715 2 2 20,825 5 5 2,838 5 5 2,852 6,862 9 9 3,880 8,887 26 32 2,893 4 4 5,940 4,958 46 46 2,
    968 16 17 2,998 2,1015 4,1022 24 41 2,1052 3,1069 46 46 2,1078 22 20 2,1098 3,1124 4,1133 31 46 2,1160 4,1178 38 46 2,1188 17 16 2,1216 3,
    1241 25 46 1.5,1271 3,1289 46 46 2,1299 24 20 2,1343 3,1353 31 46 2,1380 3,1399 46 46 2,1409 20 16 2,1437 2,1463 24 46 1.5,1491 3,1509 46 46 2,1519 20 20 2`)
    .hits(C, 3, `
    67 27 46 2,100 3,119 46 46 2,133 18 18 2,165 3,194 27 46 2,230 4,248 46 46 3,262 42 33 3,272 28 28 3,280 44 44 3,291 46 46 3,300 19 18 7,
    320 6 6 3,350 4 3 10,424 1,490 3 3 1,556 2 2 1,622 3 3 1,688 2 2 1,732 1,752 4 3 1,808 6,820 7 7 3,842 36 46 2,849 46 46 3,
    858 9 9 4,885 4,905 36 46 2,917 22 20 2`);

  const snare = () => new Envelope(0).hits(A, 2.45, `
    34 28 23 1,87 7 9 1,141 6 9 1,193 5 6 1,244 4 8 1,297 5 11 1,352 7 9 1,403 5 8 1,457 5 7 1,511 4 9 1,561 4 9 1,614 5 12 1,668 4 8 1,
    721 5 9 1,773 3 4 1,829 3 5 1,881 4 6 1,935 33 32 1,986 14 14 1,1042 12 18 1,1094 5 3 1,1148 5 5 1,1202 3 5 1,1253 3 5 1,1305 6 9 1,
    1362 4 4 1,1415 3 4 1,1467 3 8 1,1520 5 9 1`)
    .hits(B, 2.529, `
    26 5 9 1,55 37 46 1,57 13 12 9,75 6 6 40,97 33 41 1,98 8 12 5,136 46 46 1,138 12 12 14,213 22 21 1,241 36 46 1,243 6 6 5,269 36 46 1,272 32 30 8,
    282 18 16 11,330 2 2 60,457 17 20 3,449 12 12 2,485 46 46 1,487 12 12 14,525 12 12 4,563 42 46 1,565 12 12 16,643 21 24 2,645 9 9 8,671 46 46 1,673 10 10 8,
    697 24 17 2,699 12 12 16,825 21 22 2,834 30 29 2,852 33 27 2,862 46 43 2,872 20 20 3,880 46 46 2,888 46 46 3,891 46 46 5,940 20 16 1,957 7,968 46 46 3,970 11 11 5,
    996 11 10 2,1013 22 30 2,1052 16 26 1,1067 8,1077 46 46 3,1079 14 14 5,1106 7,1124 16 16 1,1160 20 21 1,1178 7,1188 46 46 2,1191 12 12 4,1216 19 17 1,1240 11 11 1,
    1232 8,1269 15 27 1,1286 9,1297 46 46 3,1300 14 14 4,1325 10,1343 13 28 1,1353 16 13 1,1380 17 22 1,1399 9,1409 46 46 3,1411 14 14 4,1435 12 13 1,1455 14 17 1,
    1464 13 12 1,1491 11 12 1,1509 8,1520 46 46 3,1522 14 14 5,1547 11 10 1`)
    .hits(C, 3, `
    34 11 9 1,56 14 8 1,67 15 16 1,98 22 16 1,119 8 8 2,130 46 46 3,134 46 46 3,165 11 9 2,185 15 18 2,190 5 5 7,216 8,228 22 28 2,248 8,261 46 46 3,271 40 36 3,
    280 46 46 3,287 46 46 3,291 46 46 4,305 11 11 9,358 26 27 1,366 2 2 24,424 29 22 1,490 28 19 1,500 1 1 20,556 30 19 1,622 32 27 1,686 30 34 1,700 1 1 30,752 32 41 1,807 33 24 4,
    819 38 38 4,840 9 9 6,850 46 46 2,856 22 20 12,884 21 17 5,916 46 46 3`);

  const snareHits = [888, 968, 1077, 1188, 1297, 1409, 1520];
  const snareBottom = () => new Envelope(0).hits(A, 2.45, '35 2 2 1,935 2 2 1')
    .hits(B, 2.529, `55 2 2 50,97 3,136 3 3 4,213 4,235 2 2 20,270 5 4 9,450 3,458 4,485 3 3 30,525 3,563 3 3 14,645 2 2 12,671 3,699 7 7 2,705 2 2 14,
      825 4,838 5,852 5,862 7 7 3,880 6,` + snareHits.map(x => `${x} 46 46 ${x === 1188 ? 1 : 2},${x + 3} 9 9 4,${x - 10} 5 4 2,${x + 30} 2 2 3,${x + 52} 3 3 2,${x + 82} 3 3 2`).join())
    .hits(C, 3, '56 2,67 3,98 2,120 4,131 46 46 1,133 46 46 2,136 9 9 4,165 3,185 3,194 3,228 5,248 5,261 17 17 2,270 8 8 3,280 20 21 2,290 24 27 2,300 5 4 6,358 2,424 1,490 1,556 1,807 5 4 3,819 5 5 4,848 8 11 3,862 2 2 12,907 4,916 46 46 2');

  const hat = () => new Envelope(0).hits(A, 2.45, `
    34 9 8 1,87 3 3 1,141 3 3 1,193 2 2 1,244 2 2 1,297 3 3 1,352 3 3 1,403 2 2 1,457 2 2 1,511 2 2 1,561 2 2 1,614 3 3 1,668 2 2 1,721 3 3 1,
    829 1,935 13 12 1,986 6 6 1,1042 4 4 1,1094 2 2 1,1148 2 2 1,1202 2 2 1,1305 3 3 1,1362 2 2 1,1467 2 2 1,1520 3 3 1`)
    .hits(B, 2.529, `
    57 5 6 5,75 2 2 30,97 6 5 3,136 6 10 2,140 4 4 12,213 5 6 1,241 6 6 3,269 12 8 2,275 9 8 10,300 2 2 30,449 12 19 2,457 18 16 5,485 10 11 2,
    525 4 4 4,563 6 9 2,575 2 2 30,643 18 18 4,655 4 4 15,671 6 6 4,697 5 8 4,720 2 2 30,825 18 23 2,835 27 29 2,852 34 30 2,862 46 41 3,878 46 46 3,887 29 28 3,
    895 8 8 5,940 14 15 1,957 3,968 26 30 1.5,1000 9 9 2,1015 19 20 2,1052 15 18 1,1077 26 30 1.5,1068 4,1106 6,1124 14 14 1,1160 13 16 1,1188 28 32 1.5,
    1216 15 18 1,1232 5,1240 7 10 1,1270 12 14 1.5,1288 4,1297 26 27 2,1325 8 12 1,1342 10 12 1,1353 9 11 1,1380 11 11 1,1408 20 28 1.5,1436 9 8 1,1455 7 7 1,
    1464 9 8 1,1491 10 12 1,1519 21 21 2,1547 6 6 1`)
    .hits(C, 3, `
    34 7 6 1,56 7 6 1,67 8 7 1,98 14 11 1,120 3,132 28 28 2,165 10 8 1,185 14 13 1,218 6,228 22 20 2,250 4,260 17 12 3,271 9 9 3,280 16 14 3,290 22 18 4,305 5 5 7,
    358 6 5 1.5,424 5 8 1,490 7 8 1,556 8 8 1,622 9 9 1,686 16 10 1,752 7 6 1,806 32 33 2,818 33 37 4,828 9 9 12,850 10 9 5,884 17 16 4,916 32 32 2`);

  const tom = () => new Envelope(0).hits(A, 2.45, '34 3 3 1,87 1 1 1,352 1 1 1,935 3 3 1,986 1')
    .hits(B, 2.529, `
    55 8 5 1,58 2 2 20,97 4 4 1.5,136 4 3 3,140 2 2 12,213 8 5 1,241 3,269 8 4 1.5,275 3 3 14,450 2,458 4,485 4 4 2,525 4 4 2,563 4 4 3,645 3,671 5 4 2,697 5 3 4,
    710 2 2 12,825 4,838 4,852 5,862 7 7 2,878 7,887 13 12 3,893 4 3 5,940 3,968 12 10 2,1015 4 4 2,1052 3,1077 10 9 2,1124 3,1160 3,1188 10 8 2,1216 3,1270 3,1297 11 10 2,
    1343 3,1380 3,1408 11 11 2,1436 2,1491 3,1519 12 11 2`)
    .hits(C, 3, '56 2,98 3,132 11 9 2,185 2,228 4,248 4,260 11 7 3,271 6,280 12 10 2,290 15 15 3,302 4 3 6,358 4 4 1.5,424 3 3 1,490 3 3 1,556 2,622 3,686 3,752 3,806 6 4 2,820 6 5 4,850 5 4 4,884 4,917 14 10 2');

  const tom2 = () => new Envelope(0).hits(C, 3, '260 46 46 2,269 44 44 1,280 46 46 3,288 46 46 3,292 46 46 3');

  const TRACKS = [
    { name: '01 Vocal', bg: '#253a45', fill: '#4592b9', line: '#72adca', wave: vocal, cursor: true },
    { name: '02 Bass DI', bg: '#2e3f24', fill: '#6eaa46', line: '#93c077', wave: bass },
    { name: '03 Kick', bg: '#342544', fill: '#7a3fb1', line: '#a06acb', wave: kick },
    { name: '04 Snare Top', bg: '#472625', fill: '#ba5a53', line: '#cf8781', wave: snare },
    { name: '05 SnareBottom', bg: '#264031', fill: '#4aaa7b', line: '#7cc5a0', wave: snareBottom },
    { name: '06 Hat', bg: '#433e26', fill: '#b0a145', line: '#cdc27b', wave: hat },
    { name: '07 Tom 1 Hi', bg: '#2a2443', fill: '#5840b0', line: '#8270cc', wave: tom },
    { name: '08 Tom 2 Lo', bg: '#42233f', fill: '#a8509e', line: '#c77fc0', wave: tom2 },
  ];

  class WaveLane extends HTMLElement {
    connectedCallback() {
      const t = TRACKS[this.getAttribute('track')];
      let grid = '';
      for (let s = 14; s <= 76; s += 2) grid += `M${timeToX(s)} 0v92`;
      render(this, `
        :host { display: block; flex: 1; min-width: 0; padding-top: 1px;
          background: linear-gradient(#000 93px, #000 94px, #343434 94px, #343434 95px, #6a6a6a 95px, #6a6a6a 96px, #222 96px); }
        svg { background: ${t.bg}; width: 100%; }
      `, `
        <svg height="92">
          <path d="${grid}" stroke="#fff" stroke-opacity=".2"/>
          <path d="${t.wave().path(46.5)}" fill="${t.fill}" stroke="${t.line}"/>
          ${t.cursor ? '<path d="M299.500 0v92" stroke="#fff"/>' : ''}
        </svg>
      `);
    }
  }
  customElements.define('wave-lane', WaveLane);

  class TrackHead extends HTMLElement {
    connectedCallback() {
      const name = TRACKS[this.getAttribute('track')].name;
      render(this, `
        :host { display: flex; width: 162px; height: 95px; flex: none; background: #2c2c2c; }
        .side { width: 15px; background: #15355f; display: flex; flex-direction: column; align-items: center; justify-content: space-between; padding: 2px 0 3px; border-right: 1px solid #0d2340; }
        .ctl { width: 110px; background: #313131; padding-top: 1px; }
        .row { display: flex; }
        .name { background: #222; height: 15px; }
        .name span { flex: 1; text-align: center; font: bold 12px/16px "Liberation Sans", sans-serif; color: #c9c9c9; white-space: nowrap; }
        .name button { width: 12px; border-left: 1px solid #3a3a3a; padding-left: 2px; height: 15px; }
        .name svg { margin-top: -6px; }
        .keys { gap: 10px; padding: 4px 0 5px 8px; }
        .keys button { width: 16px; height: 15px; background: linear-gradient(#6a6a6a, #4d4d4d 50%, #454545); border: 1px solid #202020; color: #fff; font-size: 11px; font-weight: bold; line-height: 12px; }
        .keys .rec { background: linear-gradient(#6e5050, #4f3434); display: grid; place-items: center; }
        .rec i { width: 9px; height: 9px; border-radius: 50%; background: #e3dcdc; }
        .pills { padding-left: 3px; gap: 3px; margin-bottom: 3px; font-size: 9px; font-weight: bold; }
        .pill { position: relative; height: 15px; line-height: 14px; border-radius: 2px; background: linear-gradient(#5e5e5e, #474747); box-shadow: 0 0 0 1px #242424; color: #c4c4c4; display: block; }
        .pill select, .pill button { width: 100%; height: 15px; text-align: center; }
        .pill svg { position: absolute; right: 2px; top: 3px; pointer-events: none; }
        .small { width: 11px; height: 15px; display: grid; place-items: center; }
        .small svg { position: static; }
        .field { flex: 1; margin-right: 3px; background: #282828; height: 15px; padding: 3px 2px; }
        .meter { width: 8px; margin: 2px 10px 2px 4px; border: 1px solid #000; background: linear-gradient(#4c0000 5px, #26220c 5px, #1a2505 50%, #332c04 50%); }
        .edge { width: 15px; border-left: 2px solid #151515; display: flex; align-items: center; padding-left: 4px; }
        .edge i { width: 8px; height: 1px; background: #666; }
      `, `
        <div class="side">
          <svg width="11" height="11"><circle cx="5.500" cy="5.500" r="5.500" fill="#7f97b8"/><path d="M2.500 4h6l-3 4z" fill="#0d2340"/></svg>
          ${icon(10, 10, '<path d="M.500.500h9v9H.500z" fill="#4a6a94"/><path d="M1 2.500h2l4 5h2" stroke="#0d2340" stroke-width="1.500"/>', '#8fa8c8')}
        </div>
        <div class="ctl">
          <div class="row name"><span>${name}</span><button aria-label="Playlists">${down()}</button></div>
          <div class="row keys"><button class="rec" aria-label="Record enable"><i></i></button><button>I</button><button>S</button><button>M</button></div>
          <div class="row pills"><label class="pill" style="width:103px"><select aria-label="Track view"><option>waveform</option></select>${down()}</label></div>
          <div class="row pills">
            <button class="pill small" aria-label="Freeze">${icon(9, 9, '<path d="M4.500 0v9M.800 2l7.400 5M8.200 2L.800 7" stroke-width="1.500"/>', '#ddd')}</button>
            <span class="pill" style="width:29px"><button>dyn</button></span>
            <label class="pill" style="width:57px"><select aria-label="Automation mode" style="color:#2fb866">
              <option>read</option></select>${down()}</label>
          </div>
          <div class="row pills">
            <button class="pill small" aria-label="Timebase">${timebase(8)}</button>
            <span class="field">${icon(8, 9, '<path d="M3.500 0v8M0 8h7M2 6.500h3" stroke-width="1.500"/>')}</span>
          </div>
        </div>
        <i class="meter"></i>
        <div class="edge"><i></i></div>
      `);
    }
  }
  customElements.define('track-head', TrackHead);

  class EditArea extends HTMLElement {
    connectedCallback() {
      const glyph = d => icon(9, 9, `<path d="${d}" fill="#8f8f8f" stroke="none"/>`);
      const minus = glyph('M1 4h7v2H1z');
      const plus = glyph('M1 4h2.500V1.500h2V4H8v2H5.500v2.500h-2V6H1z');
      render(this, `
        :host { display: flex; flex-direction: column; min-width: 0; flex: 1; background: #000; }
        universe-view { margin-bottom: 5px; }
        .tracks { flex: 1; min-height: 0; display: flex; overflow: hidden; }
        .lanes { flex: 1; min-width: 0; overflow: hidden; }
        .track { display: flex; height: 97px; }
        .vbar { width: 15px; background: #1c1c1c; display: flex; flex-direction: column; align-items: center; }
        .vbar button, .hbar button { width: 15px; height: 15px; background: #303030; display: grid; place-items: center; flex: none; }
        .vbar .tall { height: 18px; margin-top: 1px; }
        .vbar .thumb { width: 6px; height: 261px; background: #3a3a3a; }
        .hbar { height: 15px; background: #1c1c1c; display: flex; align-items: center; flex: none; }
        .left { width: 162px; height: 15px; background: #262626; display: flex; align-items: center; padding-left: 4px; border-right: 1px solid #151515;
          background-image: linear-gradient(#1a1a1a, #1a1a1a), linear-gradient(#1a1a1a, #1a1a1a); background-size: 1px 100%; background-position: 15px 0, 30px 0; background-repeat: no-repeat; }
        .hthumb { width: 360px; height: 6px; background: #383838; margin-left: 70px; }
        .end { margin-left: auto; display: flex; gap: 1px; background: #1c1c1c; }
      `, `
        <universe-view></universe-view>
        <time-rulers></time-rulers>
        <div class="tracks">
          <div class="lanes">${TRACKS.map((t, i) => `<div class="track"><track-head track="${i}"></track-head><wave-lane track="${i}"></wave-lane></div>`).join('')}</div>
          <div class="vbar">
            <button class="tall" aria-label="Audio height">${miniWave('#8a8a8a')}</button>
            <button class="tall" aria-label="MIDI height">${icon(10, 9, '<path d="M0 2h6M3 7h6" stroke-width="2"/>', '#8a8a8a')}</button>
            <button aria-label="Scroll up" style="margin-top:4px">${icon(7, 4, '<path d="M0 4h7L3.500 0z" fill="#a0a0a0" stroke="none"/>')}</button>
            <i class="thumb"></i>
            <div style="margin-top:auto;display:grid;gap:1px"><button aria-label="Scroll down">${down('#a0a0a0')}</button><button aria-label="Smaller">${minus}</button><button aria-label="Larger">${plus}</button></div>
          </div>
        </div>
        <div class="hbar">
          <div class="left">${icon(9, 9, '<path d="M0 4.500h5M3 2L.500 4.500 3 7M8 0v9" stroke-width="1.500"/>', '#8a8a8a')}</div>
          <button aria-label="Scroll left" style="width:17px">${glyph('M6 1v7L2 4.500z')}</button>
          <i class="hthumb"></i>
          <div class="end"><button aria-label="Scroll right">${glyph('M3 1v7l4-3.500z')}</button><button aria-label="Zoom out">${minus}</button><button aria-label="Zoom in">${plus}</button>
            <button aria-label="Scroll options">${icon(9, 9, '<path d="M1 0v9M3 4.500h5M6 2l2.500 2.500L6 7" stroke-width="1.500"/>', '#8a8a8a')}</button><button aria-label="Corner" style="background:#2a2a2a"></button></div>
        </div>
      `);
    }
  }
  customElements.define('edit-area', EditArea);

  // ---------- app ----------

  class DawApp extends HTMLElement {
    connectedCallback() {
      const tracks = ['01Vc', '02B', '03Kc', '04S', '05S', '06Ht', '071', '082', '09O', '10O', '11Wr', '12G', '13S', '14B', '15T'];
      render(this, `
        :host { display: flex; flex-direction: column; box-sizing: border-box; height: 100vh; padding-bottom: 2px; }
        menu-bar { flex: none; }
        child-window { flex: 1; }
        main { flex: 1; min-height: 0; display: flex; gap: 5px; padding: 4px 4px 5px; }
        .left { display: flex; flex-direction: column; gap: 5px; }
        .grow { flex: 1; }
        .groups { height: 100px; }
        .group { display: flex; align-items: center; height: 15px; padding: 0 7px 0 20px; justify-content: space-between; }
        .group i { width: 8px; height: 12px; background: #5a00ff; border: 1px solid #3a0aa0; }
        .group em { font-size: 10px; }
        .foot { display: flex; height: 15px; background: #1c1c1c; align-items: center; border-right: 15px solid #000; }
        .foot button { width: 15px; height: 14px; background: #333; display: grid; place-items: center; }
        .foot i { width: 25px; height: 6px; background: #3a3a3a; margin: 0 auto 0 3px; }
      `, `
        <menu-bar></menu-bar>
        <child-window>
          <edit-toolbar></edit-toolbar>
          <main>
            <div class="left">
              <list-panel class="grow" heading="TRACKS" cols="27 39 54">${tracks.map(t => `<track-row>${t}</track-row>`).join('')}</list-panel>
              <list-panel class="groups" heading="GROUPS" cols="17 29 45" az="#b4b4b4"><div class="group"><i></i><span>!</span><em>&lt;ALL&gt;</em></div></list-panel>
            </div>
            <edit-area></edit-area>
            <list-panel heading="CLIPS" cols="12 25 41 56" az="#c9a20c">${tracks.map((t, i) => `<clip-row>${two(i + 1)}</clip-row>`).join('')}
              <div class="foot" slot="foot"><button aria-label="Scroll left">${icon(5, 7, '<path d="M5 0v7L0 3.500z" fill="#a0a0a0" stroke="none"/>')}</button><i></i>
                <button aria-label="Scroll right">${icon(5, 7, '<path d="M0 0v7l5-3.500z" fill="#a0a0a0" stroke="none"/>')}</button></div>
            </list-panel>
          </main>
        </child-window>
      `);
    }
  }
  customElements.define('daw-app', DawApp);
</script>

</body>
</html>
